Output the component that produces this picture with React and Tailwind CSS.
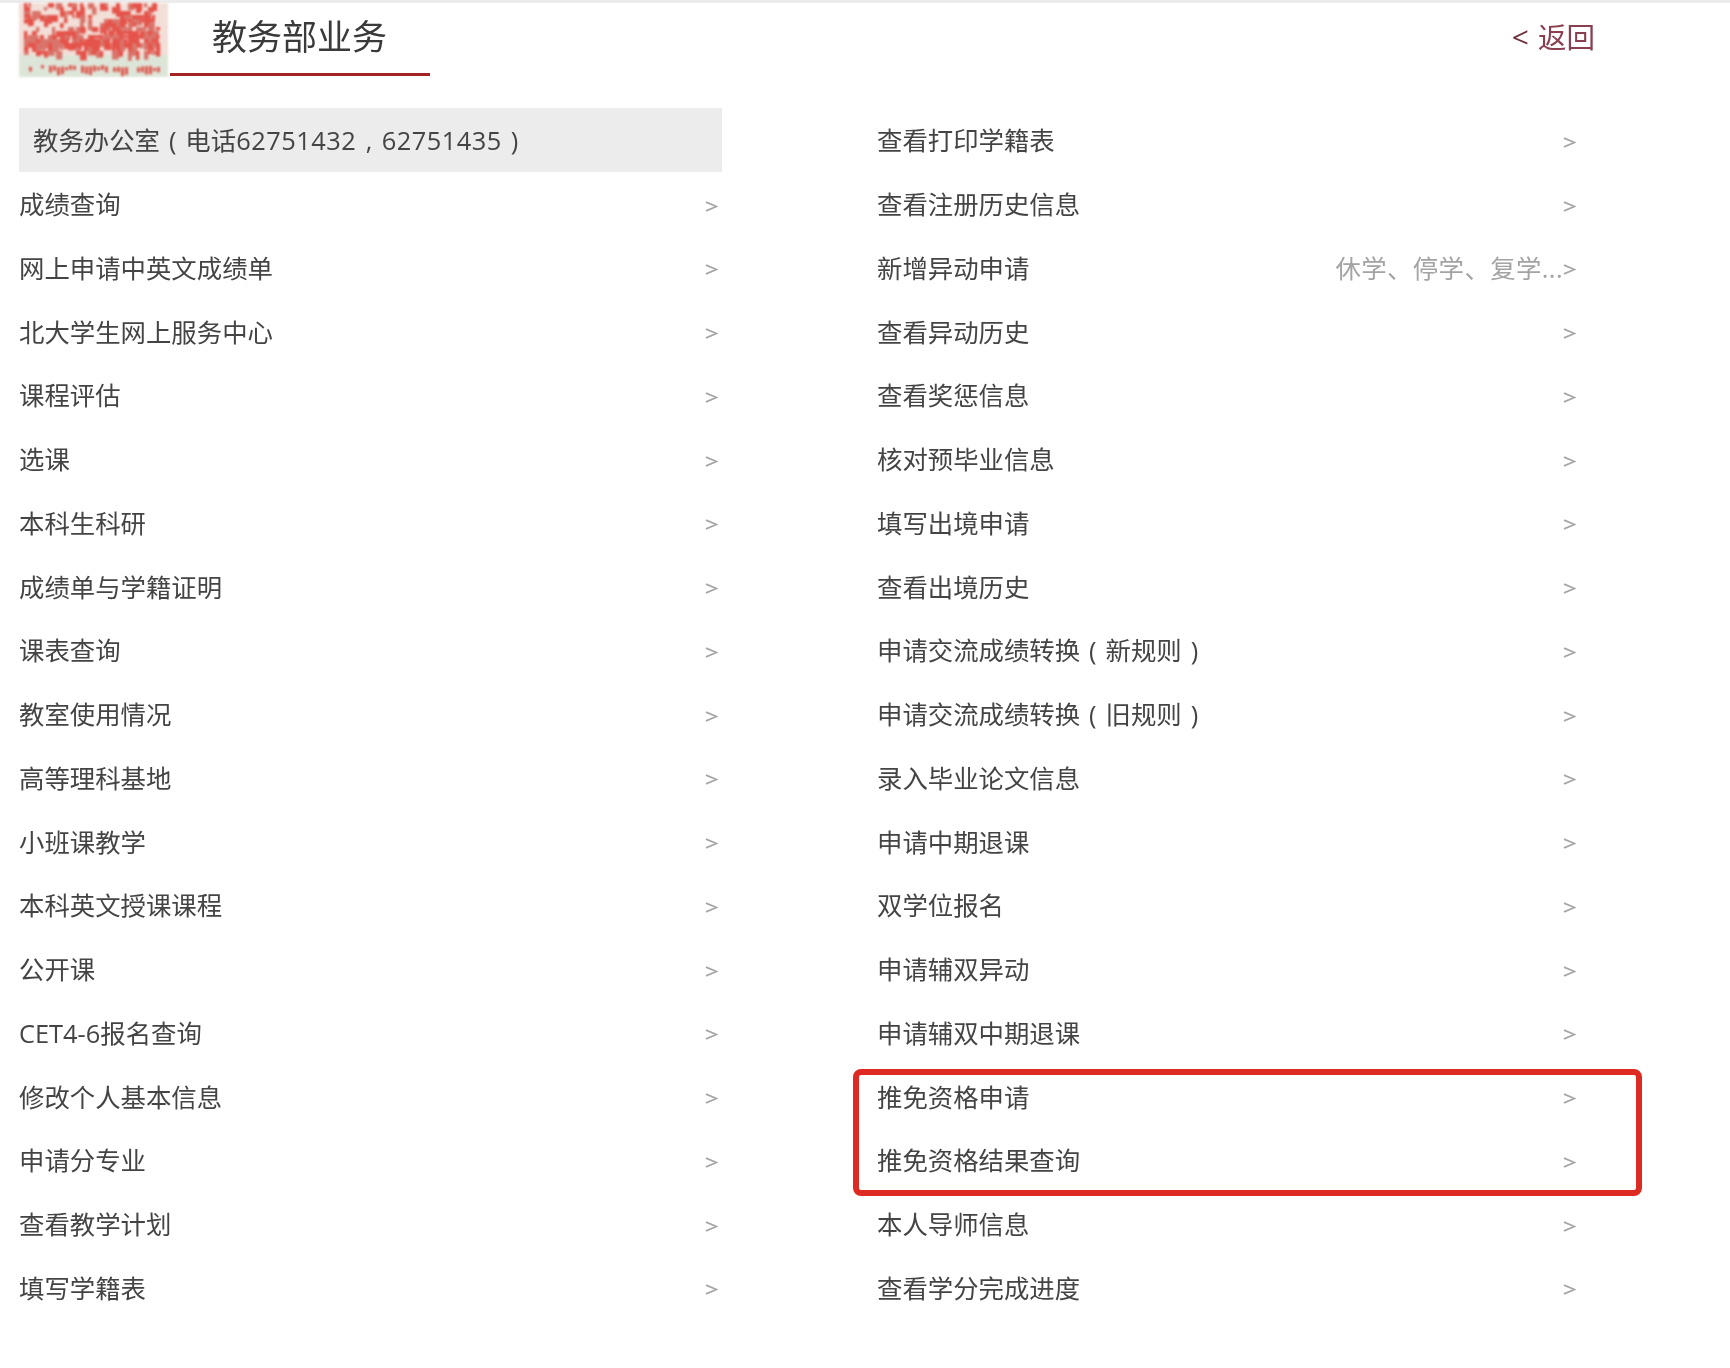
import React from 'react';

const LEFT = [
  '成绩查询', '网上申请中英文成绩单', '北大学生网上服务中心', '课程评估', '选课', '本科生科研',
  '成绩单与学籍证明', '课表查询', '教室使用情况', '高等理科基地', '小班课教学', '本科英文授课课程',
  '公开课', 'CET4-6报名查询', '修改个人基本信息', '申请分专业', '查看教学计划', '填写学籍表',
];

const RIGHT = [
  '查看打印学籍表', '查看注册历史信息', '新增异动申请', '查看异动历史', '查看奖惩信息', '核对预毕业信息',
  '填写出境申请', '查看出境历史', '申请交流成绩转换(新规则)', '申请交流成绩转换(旧规则)', '录入毕业论文信息',
  '申请中期退课', '双学位报名', '申请辅双异动', '申请辅双中期退课', '推免资格申请', '推免资格结果查询',
  '本人导师信息', '查看学分完成进度',
];

// seal picture: blotchy red print on a pale ground
function Seal() {
  const cells = [];
  let seed = 23;
  const next = () => {
    seed = (seed * 16807) % 2147483647;
    return seed / 2147483647;
  };
  for (let y = 0; y < 52; y += 4) {
    for (let x = 5; x < 138; x += 4) {
      const solid = (x > 84 && x < 128 && y > 8 && y < 36) || (y > 30 && y < 44);
      if (next() < (solid ? 0.85 : 0.42)) {
        cells.push(
          <rect
            key={`${x}-${y}`}
            x={x}
            y={y}
            width={3 + next() * 4}
            height={3 + next() * 7}
            fill={next() < 0.6 ? '#e5534a' : '#d9746a'}
          />
        );
      }
    }
  }
  for (let x = 6; x < 140; x += 4) {
    if (next() < 0.75) cells.push(<rect key={`b-${x}`} x={x} y={62 + next() * 3} width="3" height={3 + next() * 6} fill="#dc5a50" />);
  }
  return (
    <svg width="149" height="74" viewBox="0 0 149 74" className="shrink-0 blur-[1.2px]">
      <rect width="149" height="74" fill="#f2dfd8" />
      <rect y="52" width="149" height="22" fill="#dde5d8" />
      {cells}
    </svg>
  );
}

function Chevron() {
  return (
    <svg width="13" height="11" viewBox="0 0 13 11" className="mt-[4px]" fill="none" stroke="#a6a6a6" strokeWidth="1.8">
      <path d="M1 1.2 11.5 5.5 1 9.8" />
    </svg>
  );
}

function Cell({ children }) {
  return <span className="inline-block w-[25.4px] text-center">{children}</span>;
}

function Label({ text }) {
  return (
    <span>
      {text.split(/([()])/).map((part, i) =>
        part === '(' || part === ')' ? <Cell key={i}>{part}</Cell> : part
      )}
    </span>
  );
}

function Row({ label, hint }) {
  return (
    <div className="h-[63.75px] pt-[1px] flex items-center justify-between">
      <Label text={label} />
      <span className="flex items-center pr-[4px]">
        {hint && <span className="text-[25.4px] text-[#a3a3a3] tracking-[0.4px]">{hint}</span>}
        <Chevron />
      </span>
    </div>
  );
}

export default function App() {
  return (
    <div
      className="relative h-[1368px] bg-white text-[#444444] text-[25.4px] overflow-hidden blur-[0.5px]"
      style={{ fontFamily: '"Open Sans", "Noto Sans CJK SC", sans-serif' }}
    >
      <div className="h-[3px] bg-[#ececec]" />
      <div className="h-[105px] pl-[19px] pr-[135px] flex items-start justify-between">
        <div className="flex items-start">
          <Seal />
          <div className="w-[260px] h-[73px] ml-[2px] pl-[42px] border-b-[3px] border-[#a32222] text-[35px] text-[#3a3a3a] leading-[68px]">
            教务部业务
          </div>
        </div>
        <div className="pt-[14px] text-[28.5px] text-[#8a3f50] leading-[40px]">
          <span className="mr-[9px] text-[30px] text-[#6e3038]">&lt;</span>返回
        </div>
      </div>

      <div className="grid grid-cols-[703px_703px] gap-x-[155px] pl-[19px]">
        <div>
          <div className="h-[63.75px] pt-[1px] flex items-center px-[14px] bg-[#ececec]">
            教务办公室
            <Cell>(</Cell>
            电话<span className="tracking-[0.5px]">62751432</span>
            <Cell>,</Cell>
            <span className="tracking-[0.5px]">62751435</span>
            <Cell>)</Cell>
          </div>
          {LEFT.map((label) => (
            <Row key={label} label={label} />
          ))}
        </div>
        <div>
          {RIGHT.map((label) => (
            <Row key={label} label={label} hint={label === '新增异动申请' ? '休学、停学、复学...' : null} />
          ))}
        </div>
      </div>

      {/* red annotation round the two rows */}
      <div className="absolute left-[853px] top-[1069px] w-[789px] h-[127px] border-[6px] border-[#dd2a22] rounded-[8px]" />
    </div>
  );
}
